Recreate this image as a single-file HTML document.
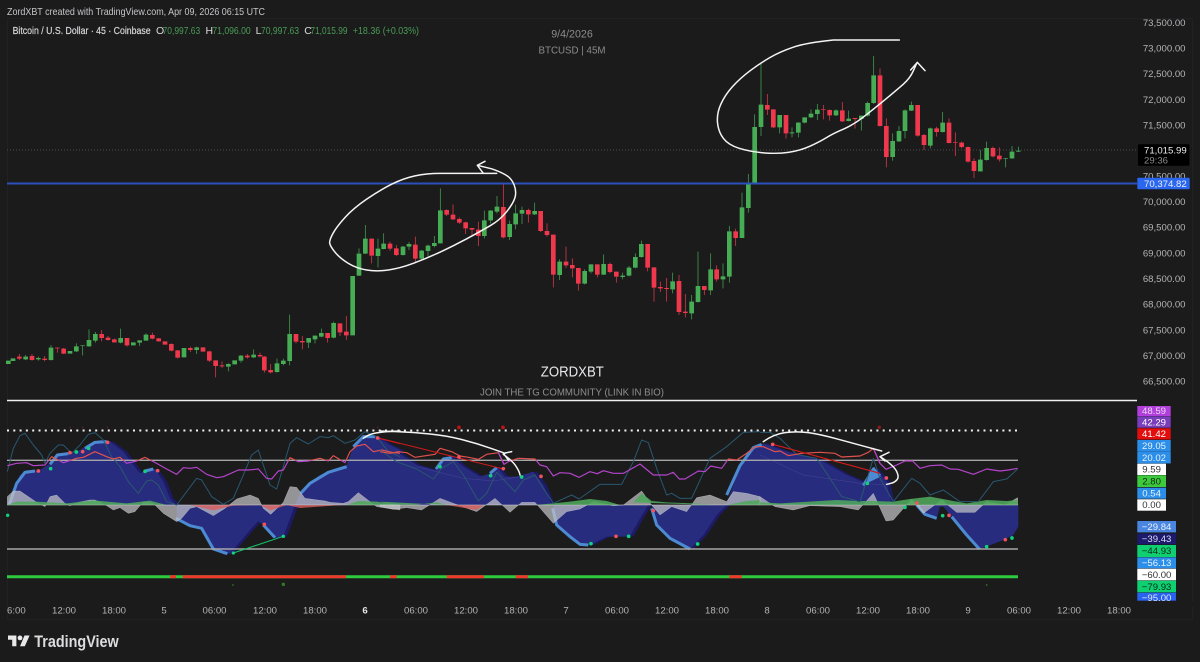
<!DOCTYPE html>
<html>
<head>
<meta charset="utf-8">
<title>BTCUSD chart</title>
<style>
html,body{margin:0;padding:0;background:#1b1b1c;width:1200px;height:662px;overflow:hidden}
svg{position:absolute;left:0;top:0;display:block;filter:blur(.3px)}
text{font-family:"Liberation Sans",sans-serif}
.pl{font-size:9.6px;fill:#b4b4b6;text-anchor:end}
.tl{font-size:9.6px;fill:#b4b4b6;text-anchor:middle}
.il{font-size:9.6px;text-anchor:middle}
.gw{fill:none;stroke:#43a552;stroke-width:2.2}
.gb{fill:none;stroke:#46ad55;stroke-width:14}
.rw{fill:none;stroke:#e8384a;stroke-width:2.2}
.rb{fill:none;stroke:#f0384c;stroke-width:14}
.hand{fill:none;stroke:#f4f4f4;stroke-width:4.5;stroke-linejoin:round;stroke-linecap:round}
.nv{fill:#282c7e}
.nd{fill:#1d1a66}
.gy{fill:#c4c4c8;fill-opacity:.72;stroke:#d8d8dc;stroke-width:1.5;stroke-opacity:.6}
.gn{fill:#4fa85c;fill-opacity:.88}
.rd{fill:#d85c5c;fill-opacity:.8}
.tb{fill:none;stroke:#4c8bd2;stroke-width:9;stroke-linejoin:round}
.te{fill:none;stroke:#28586f;stroke-width:3;stroke-linejoin:round}
.pu{fill:none;stroke:#b644cc;stroke-width:3.5;stroke-linejoin:round}
.re{fill:none;stroke:#e0524e;stroke-width:3.5;stroke-linejoin:round}
.dg{fill:#10d27e}
.dr{fill:#f2525e}
</style>
</head>
<body>
<svg width="1200" height="662" viewBox="0 0 1200 662" xmlns="http://www.w3.org/2000/svg">
<defs>
<clipPath id="cUp" clipPathUnits="userSpaceOnUse"><rect x="-100" y="0" width="1400" height="196"/></clipPath>
<clipPath id="cDn" clipPathUnits="userSpaceOnUse"><rect x="-100" y="196" width="1400" height="400"/></clipPath>
</defs>

<!-- frame -->
<path d="M7 18.5H1192M7.5 18V619M1192.5 18V619M7 619.5H1192" stroke="#212123" stroke-width="1" fill="none"/>

<!-- header -->
<text x="7" y="15" font-size="10.5" fill="#c6c6c8" textLength="258" lengthAdjust="spacingAndGlyphs">ZordXBT created with TradingView.com, Apr 09, 2026 06:15 UTC</text>
<g font-size="10.5">
<text x="12.6" y="34" fill="#d8d8da" stroke="#d8d8da" stroke-width=".2" textLength="138" lengthAdjust="spacingAndGlyphs">Bitcoin / U.S. Dollar · 45 · Coinbase</text>
<text x="156" y="34" fill="#dcdcde">O</text><text x="162.6" y="34" fill="#4a9c56" textLength="37.6" lengthAdjust="spacingAndGlyphs">70,997.63</text>
<text x="205.5" y="34" fill="#dcdcde">H</text><text x="212.4" y="34" fill="#4a9c56" textLength="38.3" lengthAdjust="spacingAndGlyphs">71,096.00</text>
<text x="255.6" y="34" fill="#dcdcde">L</text><text x="261" y="34" fill="#4a9c56" textLength="38" lengthAdjust="spacingAndGlyphs">70,997.63</text>
<text x="304.2" y="34" fill="#dcdcde">C</text><text x="310.4" y="34" fill="#4a9c56" textLength="37.1" lengthAdjust="spacingAndGlyphs">71,015.99</text>
<text x="352.8" y="34" fill="#4a9c56" textLength="66.2" lengthAdjust="spacingAndGlyphs">+18.36 (+0.03%)</text>
</g>
<text x="572" y="37.5" font-size="11" fill="#8c8c8e" text-anchor="middle" textLength="41.5" lengthAdjust="spacingAndGlyphs">9/4/2026</text>
<text x="572" y="53.5" font-size="10.5" fill="#8c8c8e" text-anchor="middle" textLength="67" lengthAdjust="spacingAndGlyphs">BTCUSD | 45M</text>
<text x="572.3" y="376.5" font-size="15" fill="#e8e8ea" text-anchor="middle" textLength="63" lengthAdjust="spacingAndGlyphs">ZORDXBT</text>
<text x="572" y="395.3" font-size="10.5" fill="#8e8e90" text-anchor="middle" textLength="184" lengthAdjust="spacingAndGlyphs">JOIN THE TG COMMUNITY (LINK IN BIO)</text>

<!-- current price dotted -->
<path d="M7 150H1137" stroke="#4c4c4e" stroke-width="1" stroke-dasharray="1 2"/>

<!-- candles A -->
<g transform="translate(0,180) scale(.33333)">
<path class="gw" d="M77 525V540M115 530V542M153 495V542M229 490V516M248 496V526M267 448V500M286 456V488M362 446V490M419 481V498M438 460V482M590 500V522M685 550V574M723 525V548M761 508V534M831 536V578M850 536V556M869 404V556M926 474V504M945 466V490M964 446V472M1001 425V475M1077 205V288M1096 135V222M1134 176V262M1151 160V208"/>
<path class="gb" d="M25 542V552M39 535V543M77 530V538M115 534V538M153 503V540M210 513V521M229 499V514M248 496V498M267 480V499M286 462V482M362 474V488M400 487V496M419 481V488M438 464V482M552 504V532M590 502V510M685 552V560M704 541V553M723 527V542M761 524V532M831 550V576M850 542V552M869 462V543M926 474V488M945 467V478M964 459V470M1001 429V473M1058 288V466M1077 221V287M1096 176V221M1134 206V228M1151 191V207"/>
<path class="rw" d="M58 522V540M96 522V542M134 528V544M172 503V518M191 504V522M305 450V484M324 468V482M343 476V488M381 474V500M457 458V478M476 474V485M514 490V514M533 510V536M571 500V516M628 512V546M647 541V592M666 544V564M742 522V536M780 518V532M793 528V578M812 552V580M888 462V490M907 468V508M983 459V488M1020 430V468M1039 408V480M1115 176V250M1170 185V212M1189 195V228"/>
<path class="rb" d="M58 530V536M96 528V540M134 536V540M172 503V505M191 506V521M305 462V474M324 473V480M343 478V487M381 474V496M457 465V476M476 475V484M495 484V494M514 492V512M533 511V533M571 504V510M609 502V515M628 514V542M647 541V558M666 556V559M742 527V532M780 525V529M793 530V571M812 570V577M888 462V485M907 483V487M983 459V474M1020 430V457M1039 455V466M1115 176V227M1170 191V206M1189 205V225"/>
</g>
<!-- candles B -->
<g transform="translate(320,160) scale(.33333)">
<path class="gw" d="M249 258V287M267 246V270M305 270V300M324 254V290M343 228V262M361 85V250M493 152V235M512 150V190M531 108V160M569 182V240M587 134V208M606 140V192M644 128V165M719 298V360M794 328V373M813 313V340M851 283V345M908 338V358M927 318V349M946 280V325M964 242V293M1058 338V400M1115 405V478M1134 275V428M1172 280V405"/>
<path class="gb" d="M249 260V285M267 252V260M305 272V296M324 257V273M343 249V258M361 151V250M493 181V228M512 152V181M531 140V155M569 192V231M587 160V193M606 150V161M644 153V163M719 305V345M794 333V371M813 313V335M851 312V344M908 347V351M927 323V347M946 291V323M964 252V291M1058 364V388M1115 425V460M1134 378V426M1172 328V391"/>
<path class="rw" d="M286 230V310M380 148V168M399 133V180M418 172V192M437 185V222M456 204V226M475 185V258M550 72V235M625 146V188M662 153V216M681 190V230M700 224V382M738 260V324M757 295V352M775 324V392M832 313V352M870 308V340M889 335V368M983 252V334M1002 322V425M1021 365V396M1040 354V425M1077 345V465M1096 402V472M1153 378V405"/>
<path class="rb" d="M286 254V296M380 150V164M399 164V178M418 177V188M437 187V205M456 204V209M475 209V228M550 141V232M625 150V163M662 153V213M681 213V225M700 224V344M738 305V316M757 315V325M775 324V371M832 313V344M870 312V336M889 335V350M983 252V323M1002 322V383M1021 381V385M1040 384V387M1077 363V456M1096 455V459M1153 378V390"/>
</g>
<!-- candles C -->
<g transform="translate(690,170) scale(.33333)">
<path class="gw" d="M99 280V355M118 168V338M156 68V204M175 12V128"/>
<path class="gb" d="M99 319V328M118 184V320M156 112V204M175 38V114"/>
<path class="rw" d="M80 286V335M137 176V228"/>
<path class="rb" d="M80 298V328M137 184V204"/>
</g>
<!-- candles D -->
<g transform="translate(700,30) scale(.33333)">
<path class="gw" d="M164 253V458M183 100V318M239 255V310M276 292V322M295 276V322M314 262V280M333 238V264M352 222V270M408 238V258M446 242V274M484 257V302M503 215V260M521 78V222M578 310V392M597 288V336M615 238V325M634 215V243M691 293V355M728 246V308M841 360V424M860 335V392M917 384V412M936 348V387M955 350V366"/>
<path class="gb" d="M164 291V458M183 224V291M239 255V292M276 307V310M295 278V308M314 262V278M333 251V262M352 239V252M408 241V256M446 266V273M484 257V267M503 219V257M521 136V219M578 333V381M597 303V334M615 241V303M634 225V242M691 295V347M728 278V306M841 389V424M860 354V390M917 384V386M936 365V385M955 362V365"/>
<path class="rw" d="M202 192V255M220 238V294M258 255V326M370 225V268M389 238V272M427 216V276M465 264V296M540 115V290M559 265V412M653 225V320M672 312V360M710 290V320M747 265V340M766 307V378M785 335V355M804 350V398M822 385V444M879 350V382M898 352V395"/>
<path class="rb" d="M202 225V239M220 238V292M258 255V310M370 238V240M389 240V256M427 241V274M465 264V267M540 136V288M559 288V381M653 225V317M672 315V345M710 295V306M747 278V339M766 337V339M785 338V351M804 351V395M822 393V423M879 354V379M898 377V388"/>
</g>

<!-- blue line -->
<path d="M7 183.5H1137" stroke="#2b50bc" stroke-width="2"/>

<!-- hand drawn main -->
<g transform="translate(320,160) scale(.33333)">
<path class="hand" d="M530 40L360 40Q320 40 285 47.5T215 72.5T140 117.5T75 172.5T39 220T29 249T45 276.5T85 310T140 330T205 330T280 310T360 276.5T440 236.5T510 197.5T560 155T585 112.5T582.5 75T557.5 45T515 26.5L472 16M472 16L495 4M472 16L490 40"/>
</g>
<g transform="translate(700,30) scale(.33333)">
<path class="hand" d="M598 30L400 30Q320 38 280 51.5T210 82.5T150 122.5T97.5 170T62.5 222.5T52.5 277.5T70 325T117.5 355T190 368.5T265 367T330 348.5T380 322.5T430 297.5T495 257.5T560 205T610 162.5T640 122.5L650 100M632 120L652 97 675 122"/>
</g>

<!-- white separator -->
<path d="M7 400.5H1137" stroke="#f0f0f0" stroke-width="1.6"/>

<!-- INDICATOR: navy dark edges & fill -->
<g transform="translate(3.5,395) scale(.33333)" class="nd">
<path d="M22 330L40 280 60 240 80 225 115 228 150 205 170 178 210 172 240 165 270 145 300 135 330 140 370 170 400 210 420 235 440 225 465 222 490 260 510 310 530 330Z"/>
<path d="M530 330L530 378 570 392 600 400 620 430 640 462 670 478 690 475 720 440 750 405 775 378 800 400 820 430 850 425 870 370 885 330Z"/>
</g>
<g transform="translate(3,395) scale(.33333)" class="nd">
<path d="M885 330L900 295 920 270 960 240 1000 222 1040 210 1060 155 1090 125 1130 125 1170 150 1200 165 1200 330Z"/>
</g>
<g transform="translate(383.5,395) scale(.33333)" class="nd">
<path d="M0 330L0 135 50 170 110 210 165 225 190 190 215 185 250 215 300 245 330 235 350 215 375 245 410 245 460 230 490 270 515 330Z"/>
<path d="M520 330L530 390 570 425 600 448 630 450 680 425 720 425 750 425 780 370 805 330Z"/>
<path d="M815 330L830 390 870 430 930 462 970 420 1010 360 1040 330Z"/>
</g>
<g transform="translate(723.5,395) scale(.33333)" class="nd">
<path d="M18 330L60 215 100 158 130 145 200 170 300 195 380 240 440 265 465 220 500 260 515 330Z"/>
</g>

<g transform="translate(0,395) scale(.33333)">
<path class="nv" d="M22 330L40 280 60 240 80 225 115 228 150 205 170 178 210 172 240 165 270 145 300 135 330 140 370 170 400 210 420 235 440 225 465 222 490 260 510 310 530 330Z"/>
<path class="nv" d="M530 330L530 378 570 392 600 400 620 430 640 462 670 478 690 475 720 440 750 405 775 378 800 400 820 430 850 425 870 370 885 330Z"/>
<path class="nv" d="M885 330L900 295 920 270 960 240 1000 222 1040 210 1060 155 1090 125 1130 125 1170 150 1200 165 1200 330Z"/>
<path class="tb" d="M28 328L50 265 75 232 105 228M150 208L172 180 205 176M255 160L285 142 320 140M435 228L460 222M528 370L570 392 605 400 640 462 682 476M790 390L825 428M902 295L930 265 985 232 1040 215M1060 155L1090 125 1125 125"/>
</g>
<g transform="translate(380,395) scale(.33333)">
<path class="nv" d="M0 330L0 135 50 170 110 210 165 225 190 190 215 185 250 215 300 245 330 235 350 215 375 245 410 245 460 230 490 270 515 330Z"/>
<path class="nv" d="M520 330L530 390 570 425 600 448 630 450 680 425 720 425 750 425 780 370 805 330Z"/>
<path class="nv" d="M815 330L830 390 870 430 930 462 970 420 1010 360 1040 330Z"/>
<path class="tb" d="M168 222L190 192 215 188M330 235L350 218M518 340L530 390 570 425 600 448 625 450M815 340L830 390 870 430 930 462"/>
</g>
<g transform="translate(720,395) scale(.33333)">
<path class="nv" d="M18 330L60 215 100 158 130 145 200 170 300 195 380 240 440 265 465 220 500 260 515 330Z"/>
<path class="nv" d="M515 330L550 330 575 320 590 325 610 360 650 370 660 335 670 335 700 370 740 420 780 462 800 455 850 435 880 420 895 395 895 330Z"/>
<path class="tb" d="M20 300L60 212 100 158 125 148M430 272L460 222 480 242M590 330L615 358 650 370M695 365L740 420 778 462"/>
<path d="M440 265L462 215 482 245Z" fill="#4c8bd2"/>
</g>

<!-- gray lines -->
<path d="M7 460.3H1018M7 549H1018" stroke="#a6a6a8" stroke-width="1.4"/>
<path d="M7 430.5H1020" stroke="#f2f2f2" stroke-width="2" stroke-dasharray="2 4.3"/>

<!-- gray/green/red areas -->
<g transform="translate(0,395) scale(.33333)">
<path class="gy" d="M22 330L22 305 40 288 60 288 85 305 110 322 135 335 150 305 170 300 195 325 210 332 235 322 270 315 285 315 320 332 340 345 360 338 385 355 405 350 430 320 460 325 490 355 530 380 545 370 570 340 590 335 640 362 675 340 710 312 750 300 775 310 790 340 812 358 850 322 870 275 890 277 915 310 975 318 990 322 1030 325 1045 320 1075 293 1110 320 1130 335 1200 345 1200 330Z"/>
<path class="gn" d="M22 330L50 320 110 320 200 325 280 316 380 325 450 317 500 330ZM1040 330L1075 318 1130 320 1170 326 1200 330Z"/>
<path class="rd" d="M570 330L640 346 700 332 780 330 812 346 860 330 900 339 1000 332 1030 330Z"/>
<path d="M22 330H1200" stroke="#d8d8da" stroke-width="2" stroke-opacity=".4"/>
<path class="te" d="M22 230L40 160 60 122 75 115 100 150 125 180 135 205 150 175 175 150 190 150 215 175 240 150 265 118 285 113 310 135 335 185 360 215 385 260 415 295 440 258 455 255 475 270 500 320 530 330 590 250 605 255 635 305 670 328 700 310 730 240 755 180 775 165 790 210 810 270 830 282 850 215 870 145 890 128 925 147 960 125 985 128 1000 122 1035 145 1065 135 1095 110 1130 125 1165 170 1200 185"/>
<path class="pu" clip-path="url(#cDn)" d="M22 212L50 205 80 203 100 212 135 210 155 185 190 203 230 190 250 187 285 170 320 185 340 192 360 187 380 205 410 198 435 187 470 205 500 222 530 238 550 218 570 220 590 217 620 238 650 248 670 245 715 225 745 225 775 222 800 250 815 252 835 228 850 225 870 188 895 200 925 198 960 190 985 198 1000 182 1035 203 1050 170 1070 153 1095 148 1120 170 1145 165 1175 172 1200 175"/>
<path class="re" clip-path="url(#cUp)" d="M22 212L50 205 80 203 100 212 135 210 155 185 190 203 230 190 250 187 285 170 320 185 340 192 360 187 380 205 410 198 435 187 470 205 500 222 530 238 550 218 570 220 590 217 620 238 650 248 670 245 715 225 745 225 775 222 800 250 815 252 835 228 850 225 870 188 895 200 925 198 960 190 985 198 1000 182 1035 203 1050 170 1070 153 1095 148 1120 170 1145 165 1175 172 1200 175"/>
<path d="M700 474L850 424" stroke="#12c868" stroke-width="3" fill="none"/>
<path d="M1133 129L1200 146" stroke="#d01a1a" stroke-width="3" fill="none"/>
<g class="dr"><circle cx="115" cy="228" r="5.5"/><circle cx="210" cy="173" r="5.5"/><circle cx="248" cy="170" r="5.5"/><circle cx="323" cy="142" r="5.5"/><circle cx="473" cy="227" r="5.5"/><circle cx="793" cy="388" r="5.5"/><circle cx="1133" cy="129" r="5.5"/></g>
<g class="dg"><circle cx="23" cy="361" r="5"/><circle cx="152" cy="221" r="5.5"/><circle cx="229" cy="171" r="5.5"/><circle cx="266" cy="160" r="5.5"/><circle cx="435" cy="229" r="5.5"/><circle cx="700" cy="474" r="5"/><circle cx="850" cy="424" r="5"/></g>
<g fill="#7a2626"><circle cx="210" cy="97" r="2"/><circle cx="248" cy="97" r="2"/><circle cx="322" cy="97" r="2"/><circle cx="1133" cy="97" r="2"/></g>
<g fill="#2f7d22"><circle cx="699" cy="570" r="2.5"/><circle cx="850" cy="568" r="5"/></g>
</g>

<g transform="translate(380,395) scale(.33333)">
<path class="gy" d="M0 330L0 335 40 343 80 338 125 345 180 310 220 325 290 350 345 310 390 352 425 322 465 322 520 385 560 350 600 342 640 320 700 332 730 330 785 288 815 330 840 360 875 335 920 350 950 308 990 300 1040 320 1060 290 1100 295 1140 305 1140 330Z"/>
<path class="gn" d="M0 320L30 328 100 330 170 322 200 330ZM465 330L520 325 570 320 630 312 680 318 720 330ZM760 322L785 295 815 318 860 322 940 325 1000 330ZM1040 330L1100 318 1140 315 1140 330Z"/>
<path class="rd" d="M200 330L290 345 310 330Z"/>
<path d="M0 330H1140" stroke="#d8d8da" stroke-width="2" stroke-opacity=".4"/>
<path d="M110 215L250 250 340 258 420 245" stroke="#6a5aa8" stroke-width="1.5" fill="none" opacity=".5"/>
<path class="te" d="M0 165L50 200 110 222 160 252 185 220 220 200 250 240 295 318 320 295 350 232 405 290 430 255 465 240 490 280 520 325 575 300 597 312 660 268 725 268 760 200 785 135 805 143 830 220 860 300 875 295 900 310 935 310 990 190 1040 155 1090 112 1140 110"/>
<path class="pu" clip-path="url(#cDn)" d="M0 170L30 175 55 170 80 173 105 187 165 178 180 160 215 170 240 183 265 187 295 193 320 178 355 173 372 208 385 200 415 190 465 192 480 210 500 215 520 243 540 233 570 235 597 247 630 230 652 236 670 227 700 235 730 235 780 207 820 240 860 240 880 232 898 252 915 252 955 228 975 230 992 213 1025 220 1045 192 1070 195 1100 175 1125 155 1140 155"/>
<path class="re" clip-path="url(#cUp)" d="M0 170L30 175 55 170 80 173 105 187 165 178 180 160 215 170 240 183 265 187 295 193 320 178 355 173 372 208 385 200 415 190 465 192 480 210 500 215 520 243 540 233 570 235 597 247 630 230 652 236 670 227 700 235 730 235 780 207 820 240 860 240 880 232 898 252 915 252 955 228 975 230 992 213 1025 220 1045 192 1070 195 1100 175 1125 155 1140 155"/>
<path d="M355 173L372 208" class="pu"/>
<path d="M0 130L370 222" stroke="#d01a1a" stroke-width="3" fill="none"/>
<circle cx="237" cy="97" r="5.5" fill="#c01515"/><circle cx="369" cy="97" r="5.5" fill="#c01515"/>
<g class="dr"><circle cx="237" cy="186" r="5.5"/><circle cx="370" cy="221" r="5.5"/><circle cx="483" cy="244" r="5.5"/><circle cx="708" cy="424" r="5.5"/><circle cx="820" cy="347" r="5.5"/></g>
<g class="dg"><circle cx="180" cy="215" r="5.5"/><circle cx="332" cy="242" r="5.5"/><circle cx="425" cy="246" r="5.5"/><circle cx="633" cy="446" r="5.5"/><circle cx="746" cy="424" r="5.5"/><circle cx="953" cy="447" r="5.5"/></g>
</g>

<g transform="translate(720,395) scale(.33333)">
<path class="gy" d="M120 330L120 305 165 335 220 345 270 332 360 335 415 345 460 295 498 378 520 375 575 312 610 355 665 315 710 352 765 352 800 320 855 330 893 308 893 330Z"/>
<path class="gn" d="M120 322L180 325 350 315 420 318 460 318 520 320 570 312 630 305 700 318 740 325 800 315 860 318 893 315 893 330 120 330Z"/>
<path d="M120 330H895" stroke="#d8d8da" stroke-width="2" stroke-opacity=".4"/>
<path d="M120 180L250 240 420 265 510 270" stroke="#6a5aa8" stroke-width="1.5" fill="none" opacity=".5"/>
<path class="te" d="M120 112L150 112 180 130 230 178 290 190 320 235 365 305 420 320 460 190 480 250 520 320 575 250 600 265 630 300 670 285 720 320 775 320 820 260 860 252 893 222"/>
<path class="pu" clip-path="url(#cDn)" d="M120 155L130 155 165 170 180 168 205 182 245 175 300 172 345 175 365 186 420 183 445 172 460 160 480 205 498 223 530 210 555 198 578 198 600 220 630 212 665 210 690 222 715 223 760 238 800 222 840 228 865 225 893 220"/>
<path class="re" clip-path="url(#cUp)" d="M120 155L130 155 165 170 180 168 205 182 245 175 300 172 345 175 365 186 420 183 445 172 460 160 480 205 498 223 530 210 555 198 578 198 600 220 630 212 665 210 690 222 715 223 760 238 800 222 840 228 865 225 893 220"/>
<path d="M460 160L480 205" class="pu"/>
<path d="M158 148L480 235" stroke="#d01a1a" stroke-width="3.5" fill="none"/>
<circle cx="478" cy="97" r="5" fill="#8e1a1a"/>
<circle cx="800" cy="570" r="2.5" fill="#2f7d22"/>
<g class="dr"><circle cx="158" cy="148" r="5.5"/><circle cx="499" cy="249" r="5.5"/><circle cx="591" cy="324" r="5.5"/><circle cx="687" cy="361" r="5.5"/><circle cx="856" cy="434" r="5.5"/></g>
<g class="dg"><circle cx="442" cy="265" r="5.5"/><circle cx="555" cy="337" r="5.5"/><circle cx="668" cy="362" r="5.5"/><circle cx="800" cy="455" r="5.5"/><circle cx="876" cy="429" r="5.5"/></g>
<path class="hand" d="M130 140Q160 118 195 113T265 113T350 131.5T442.5 156.5L485 168M507 172L480 185 495 198M480 185Q520 210 529 227.5T531.5 253.5T512.5 265L500 268"/>
</g>

<!-- hand drawn indicator first arc -->
<g transform="translate(0,395) scale(.33333)">
<path class="hand" d="M1090 130Q1105 118 1127.5 114T1175 109L1200 108"/>
</g>
<g transform="translate(380,395) scale(.33333)">
<path class="hand" d="M0 108L50 110Q100 112 150 117T245 133.5T332.5 160L375 175M395 170L370 175 385 195M370 178Q398 198 407.5 213T418.5 234L420 240"/>
</g>

<!-- signal bar -->
<path d="M7 576.7H1018" stroke="#2ecb3e" stroke-width="3"/>
<path d="M170 576.7H176M182.7 576.7H346M390 576.7H396.7M446.7 576.7H484M515.7 576.7H528M729.3 576.7H741.7" stroke="#ee3a2c" stroke-width="3"/>

<!-- price scale -->
<g>
<text class="pl" x="1185.5" y="26">73,500.00</text>
<text class="pl" x="1185.5" y="51.6">73,000.00</text>
<text class="pl" x="1185.5" y="77">72,500.00</text>
<text class="pl" x="1185.5" y="103">72,000.00</text>
<text class="pl" x="1185.5" y="128.6">71,500.00</text>
<text class="pl" x="1185.5" y="179.6">70,500.00</text>
<text class="pl" x="1185.5" y="205">70,000.00</text>
<text class="pl" x="1185.5" y="230.6">69,500.00</text>
<text class="pl" x="1185.5" y="256.4">69,000.00</text>
<text class="pl" x="1185.5" y="282">68,500.00</text>
<text class="pl" x="1185.5" y="307.6">68,000.00</text>
<text class="pl" x="1185.5" y="333.4">67,500.00</text>
<text class="pl" x="1185.5" y="359">67,000.00</text>
<text class="pl" x="1185.5" y="384.6">66,500.00</text>
</g>
<rect x="1138" y="144.3" width="51.4" height="21.4" rx="1" fill="#000"/>
<text x="1144" y="153.5" font-size="9.6" fill="#eeeeee">71,015.99</text>
<text x="1144" y="163.5" font-size="9.6" fill="#8a8a8a">29:36</text>
<rect x="1137.3" y="177.7" width="52.4" height="11.6" rx="1" fill="#2a66ee"/>
<text x="1144" y="187" font-size="9.6" fill="#e8efff">70,374.82</text>

<!-- indicator labels -->
<g transform="translate(1100,395)">
<rect x="37.3" y="11" width="33.4" height="10" fill="#b23fdc"/>
<rect x="37.3" y="21.3" width="33.4" height="11.4" fill="#7a3dbb"/>
<rect x="37.3" y="33.3" width="33.4" height="11.2" fill="#e30d0d"/>
<rect x="37.3" y="45" width="33.4" height="11.8" fill="#2b8ee8"/>
<rect x="37.3" y="57" width="33.4" height="11.4" fill="#2b8ee8"/>
<rect x="37.3" y="68.7" width="28.7" height="11.3" fill="#ffffff"/>
<rect x="37.3" y="80.3" width="28.7" height="11.7" fill="#3dcb3d"/>
<rect x="37.3" y="92.7" width="28.7" height="11" fill="#2b8ee8"/>
<rect x="37.3" y="104.3" width="28.7" height="11.4" fill="#ffffff"/>
<rect x="37.3" y="126" width="38.7" height="11.4" fill="#4a86e0"/>
<rect x="37.3" y="138.7" width="38.7" height="10.6" fill="#1d1a6e"/>
<rect x="37.3" y="150" width="38.7" height="12" fill="#0fd071"/>
<rect x="37.3" y="162.3" width="38.7" height="11" fill="#2b8ee8"/>
<rect x="37.3" y="173.7" width="38.7" height="11.6" fill="#ffffff"/>
<rect x="37.3" y="185.7" width="38.7" height="11.6" fill="#0fd071"/>
<rect x="37.3" y="197.7" width="38.7" height="8" fill="#2962ee"/>
<text class="il" x="54" y="19" fill="#ead6f5">48.59</text>
<text class="il" x="54" y="30.4" fill="#ffffff">42.29</text>
<text class="il" x="54" y="42.2" fill="#ffffff">41.42</text>
<text class="il" x="54" y="54.2" fill="#e6f2ff">29.05</text>
<text class="il" x="54" y="66" fill="#e6f2ff">20.02</text>
<text class="il" x="51.6" y="77.6" fill="#333">9.59</text>
<text class="il" x="51.6" y="89.4" fill="#0c2a0c">2.80</text>
<text class="il" x="51.6" y="101.4" fill="#e6f2ff">0.54</text>
<text class="il" x="51.6" y="113.2" fill="#333">0.00</text>
<text class="il" x="56.6" y="135" fill="#e6f2ff">−29.84</text>
<text class="il" x="56.6" y="147.2" fill="#dadaf2">−39.43</text>
<text class="il" x="56.6" y="159.2" fill="#052a18">−44.93</text>
<text class="il" x="56.6" y="171" fill="#e6f2ff">−56.13</text>
<text class="il" x="56.6" y="182.8" fill="#333">−60.00</text>
<text class="il" x="56.6" y="194.8" fill="#052a18">−79.93</text>
<text class="il" x="56.6" y="206" fill="#dde6ff">−95.00</text>
</g>
<rect x="1136" y="601" width="60" height="6" fill="#1b1b1c"/>

<!-- time axis -->
<g>
<text x="7" y="613.5" font-size="9.6" fill="#b4b4b6">6:00</text>
<text class="tl" x="64" y="613.5">12:00</text>
<text class="tl" x="114" y="613.5">18:00</text>
<text class="tl" x="164" y="613.5">5</text>
<text class="tl" x="214.5" y="613.5">06:00</text>
<text class="tl" x="265" y="613.5">12:00</text>
<text class="tl" x="315" y="613.5">18:00</text>
<text class="tl" x="365" y="613.5" font-weight="bold" style="fill:#e8e8ea">6</text>
<text class="tl" x="416" y="613.5">06:00</text>
<text class="tl" x="466" y="613.5">12:00</text>
<text class="tl" x="516" y="613.5">18:00</text>
<text class="tl" x="566" y="613.5">7</text>
<text class="tl" x="617" y="613.5">06:00</text>
<text class="tl" x="667" y="613.5">12:00</text>
<text class="tl" x="717" y="613.5">18:00</text>
<text class="tl" x="767" y="613.5">8</text>
<text class="tl" x="818" y="613.5">06:00</text>
<text class="tl" x="868" y="613.5">12:00</text>
<text class="tl" x="918" y="613.5">18:00</text>
<text class="tl" x="968" y="613.5">9</text>
<text class="tl" x="1019" y="613.5">06:00</text>
<text class="tl" x="1069" y="613.5">12:00</text>
<text class="tl" x="1119" y="613.5">18:00</text>
</g>

<!-- TradingView logo -->
<g transform="translate(8,635.5) scale(.6)" fill="#e8e8ea">
<path d="M14 18H7V7H0V0h14v18zM28 18h-8L27.5 0H36l-8 18z"/><circle cx="20" cy="4" r="4"/>
</g>
<text x="34.3" y="647" font-size="16.5" font-weight="bold" fill="#dcdcde" textLength="84.4" lengthAdjust="spacingAndGlyphs">TradingView</text>
</svg>
</body>
</html>
